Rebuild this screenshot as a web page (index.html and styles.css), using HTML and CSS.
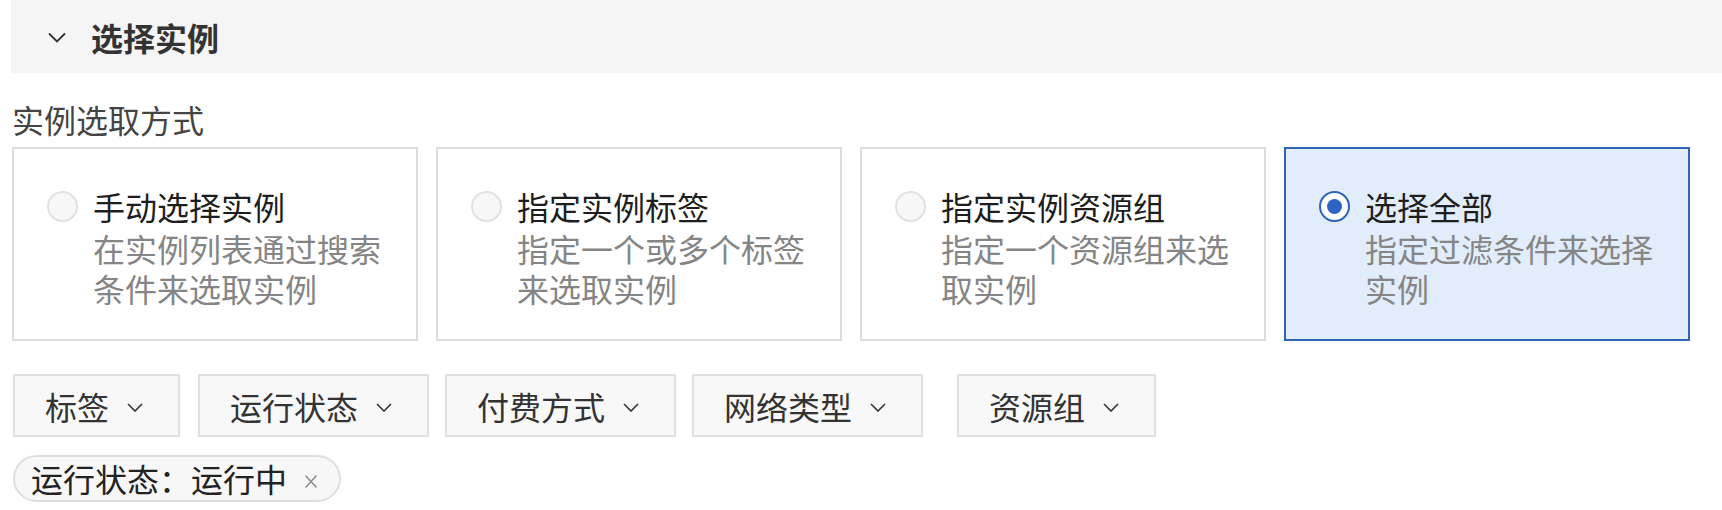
FILE: index.html
```html
<!DOCTYPE html>
<html lang="zh-CN">
<head>
<meta charset="utf-8">
<title>选择实例</title>
<link rel="stylesheet" href="styles.css">
</head>
<body>
<div class="panel">
  <div class="panel-head">
    <svg class="head-chevron" width="18" height="11" viewBox="0 0 18 11"><polyline points="1,1.5 9,9.5 17,1.5" fill="none" stroke="#333" stroke-width="1.8"/></svg>
    <span class="panel-title">选择实例</span>
  </div>
  <div class="panel-body">
    <div class="field-label">实例选取方式</div>
    <div class="cards">
      <div class="card">
        <span class="radio"></span>
        <div class="card-text">
          <div class="card-title">手动选择实例</div>
          <div class="card-desc">在实例列表通过搜索条件来选取实例</div>
        </div>
      </div>
      <div class="card">
        <span class="radio"></span>
        <div class="card-text">
          <div class="card-title">指定实例标签</div>
          <div class="card-desc">指定一个或多个标签来选取实例</div>
        </div>
      </div>
      <div class="card">
        <span class="radio"></span>
        <div class="card-text">
          <div class="card-title">指定实例资源组</div>
          <div class="card-desc">指定一个资源组来选取实例</div>
        </div>
      </div>
      <div class="card card-active">
        <span class="radio radio-on"></span>
        <div class="card-text">
          <div class="card-title">选择全部</div>
          <div class="card-desc">指定过滤条件来选择实例</div>
        </div>
      </div>
    </div>
    <div class="filters">
      <button class="filter">标签<svg class="chev" width="16" height="9" viewBox="0 0 16 9"><polyline points="1,1 8,8 15,1" fill="none" stroke="#333" stroke-width="1.6"/></svg></button>
      <button class="filter filter-second">运行状态<svg class="chev" width="16" height="9" viewBox="0 0 16 9"><polyline points="1,1 8,8 15,1" fill="none" stroke="#333" stroke-width="1.6"/></svg></button>
      <button class="filter">付费方式<svg class="chev" width="16" height="9" viewBox="0 0 16 9"><polyline points="1,1 8,8 15,1" fill="none" stroke="#333" stroke-width="1.6"/></svg></button>
      <button class="filter">网络类型<svg class="chev" width="16" height="9" viewBox="0 0 16 9"><polyline points="1,1 8,8 15,1" fill="none" stroke="#333" stroke-width="1.6"/></svg></button>
      <button class="filter filter-last">资源组<svg class="chev" width="16" height="9" viewBox="0 0 16 9"><polyline points="1,1 8,8 15,1" fill="none" stroke="#333" stroke-width="1.6"/></svg></button>
    </div>
    <div class="tags">
      <span class="tag">运行状态：运行中<svg class="tag-close" width="14" height="15" viewBox="0 0 14 15"><path d="M1.5 1.5 L12.5 13.5 M12.5 1.5 L1.5 13.5" stroke="#8a8a8a" stroke-width="1.5" fill="none"/></svg></span>
    </div>
  </div>
</div>
</body>
</html>
```

FILE: styles.css
```css
* { box-sizing: border-box; }

body {
  margin: 0;
  background: #fff;
  font-family: "Noto Sans CJK SC", "Noto Sans", sans-serif;
  font-size: 32px;
  color: #333;
}

.panel-head {
  margin-left: 11px;
  height: 73px;
  background: #f5f5f5;
  display: flex;
  align-items: center;
  padding-left: 37px;
}

.head-chevron { flex: none; margin-top: 1px; }

.panel-title {
  margin-left: 25px;
  font-weight: bold;
  color: #333;
  line-height: 44px;
}

.panel-body {
  padding: 0 32px 0 12px;
}

.field-label {
  margin-top: 24px;
  margin-bottom: 6px;
  line-height: 44px;
  color: #444;
}

.cards {
  display: grid;
  grid-template-columns: repeat(4, 1fr);
  gap: 18px;
}

.card {
  height: 194px;
  border: 2px solid #dcdcdc;
  background: #fff;
  display: flex;
  align-items: flex-start;
  padding: 36px 24px 0 33px;
}

.card-active {
  border-color: #2f63b5;
  background: #e2edfb;
}

.radio {
  flex: none;
  width: 31px;
  height: 31px;
  margin-top: 6px;
  border-radius: 50%;
  border: 2px solid #e1e1e1;
  background: #f7f7f7;
}

.radio-on {
  border-color: #2e63bd;
  background: #fff;
  display: flex;
  align-items: center;
  justify-content: center;
}

.radio-on::after {
  content: "";
  width: 15px;
  height: 15px;
  border-radius: 50%;
  background: #2c64c6;
}

.card-text {
  margin-left: 15px;
}

.card-title { color: #1e1e1e; line-height: 43px; }

.card-desc { color: #858585; line-height: 40px; }

.filters {
  margin-top: 33px;
  display: flex;
  gap: 16px;
  margin-left: 1px;
}

.filter {
  height: 63px;
  display: flex;
  align-items: center;
  padding: 0 35px 0 30px;
  border: 2px solid #e0e0e0;
  background: #f8f8f8;
  font-family: inherit;
  font-size: 32px;
  color: #333;
}

.filter-second { margin-left: 2px; }
.filter-last { margin-left: 18px; }

.chev {
  flex: none;
  margin-left: 18px;
  margin-top: 4px;
}

.tags {
  margin-top: 18px;
  margin-left: 1px;
  display: flex;
}

.tag {
  height: 47px;
  display: flex;
  align-items: center;
  padding: 0 21px 0 16px;
  border: 2px solid #dedede;
  border-radius: 24px;
  background: #f7f7f7;
  color: #222;
  line-height: 43px;
}

.tag-close {
  flex: none;
  margin-left: 17px;
  margin-top: 6px;
}
```
